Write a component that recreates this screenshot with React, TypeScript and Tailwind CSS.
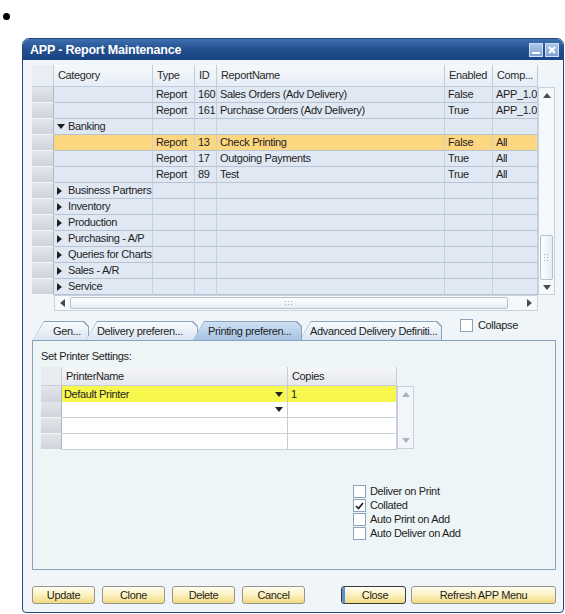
import React from 'react'

type ReportRow =
  | { kind: 'item'; type: string; id: string; name: string; enabled: string; comp: string; selected?: boolean }
  | { kind: 'group'; label: string; open?: boolean }

const reportRows: ReportRow[] = [
  { kind: 'item', type: 'Report', id: '160', name: 'Sales Orders (Adv Delivery)', enabled: 'False', comp: 'APP_1.0' },
  { kind: 'item', type: 'Report', id: '161', name: 'Purchase Orders (Adv Delivery)', enabled: 'True', comp: 'APP_1.0' },
  { kind: 'group', label: 'Banking', open: true },
  { kind: 'item', type: 'Report', id: '13', name: 'Check Printing', enabled: 'False', comp: 'All', selected: true },
  { kind: 'item', type: 'Report', id: '17', name: 'Outgoing Payments', enabled: 'True', comp: 'All' },
  { kind: 'item', type: 'Report', id: '89', name: 'Test', enabled: 'True', comp: 'All' },
  { kind: 'group', label: 'Business Partners' },
  { kind: 'group', label: 'Inventory' },
  { kind: 'group', label: 'Production' },
  { kind: 'group', label: 'Purchasing - A/P' },
  { kind: 'group', label: 'Queries for Charts' },
  { kind: 'group', label: 'Sales - A/R' },
  { kind: 'group', label: 'Service' },
]

const headers = ['Category', 'Type', 'ID', 'ReportName', 'Enabled', 'Comp...']

const tabs = [
  { label: 'Gen...', box: 'w-[56px]', pad: 'pl-[20px]' },
  { label: 'Delivery preferen...', box: 'w-[112px] -ml-[3px]', pad: 'pl-[11px]' },
  { label: 'Printing preferen...', box: 'w-[109px] -ml-[5px] z-10', pad: 'pl-[15px]', active: true },
  { label: 'Advanced Delivery Definiti...', box: 'w-[142px] -ml-[2px]', pad: 'pl-[10px]' },
]

const printOptions = [
  { label: 'Deliver on Print', checked: false },
  { label: 'Collated', checked: true },
  { label: 'Auto Print on Add', checked: false },
  { label: 'Auto Deliver on Add', checked: false },
]

function Arrow({ dir, color = '#4a4a4a' }: { dir: 'up' | 'down' | 'left' | 'right'; color?: string }) {
  if (dir === 'up' || dir === 'down') {
    return (
      <svg width="8" height="5" viewBox="0 0 8 5" className="shrink-0">
        <path d={dir === 'up' ? 'M0 5L4 0L8 5Z' : 'M0 0L8 0L4 5Z'} fill={color} />
      </svg>
    )
  }
  return (
    <svg width="5" height="8" viewBox="0 0 5 8" className="shrink-0">
      <path d={dir === 'right' ? 'M0 0L5 4L0 8Z' : 'M5 0L0 4L5 8Z'} fill={color} />
    </svg>
  )
}

function Grip({ across }: { across?: boolean }) {
  return across ? (
    <svg width="8" height="5" viewBox="0 0 8 5">
      {[0, 3, 6].map((x) => (
        <g key={x} fill="#9fb0c3">
          <rect x={x} y="0" width="1" height="1" />
          <rect x={x} y="3" width="1" height="1" />
        </g>
      ))}
    </svg>
  ) : (
    <svg width="5" height="8" viewBox="0 0 5 8">
      {[0, 3, 6].map((y) => (
        <g key={y} fill="#9fb0c3">
          <rect x="0" y={y} width="1" height="1" />
          <rect x="3" y={y} width="1" height="1" />
        </g>
      ))}
    </svg>
  )
}

function RowHead() {
  return <div className="border-r border-r-[#aeb6c0] border-b border-b-[#f3f5f8] bg-gradient-to-b from-[#e3e6eb] to-[#cfd4db]" />
}

function Cell({ children, bg }: { children?: React.ReactNode; bg: string }) {
  return (
    <div className={`flex items-center pl-[3px] whitespace-nowrap overflow-hidden border-r border-r-[#c6d0dc] border-b border-b-[#b7c3d1] ${bg}`}>
      {children}
    </div>
  )
}

function ReportGrid() {
  return (
    <div className="w-[523px]">
      <div className="flex">
        <div className="w-[506px]">
          <div className="grid grid-cols-[22px_99px_42px_22px_228px_48px_45px] h-[22px]">
            <div className="border-r border-b border-[#c2cddb] bg-[#e9eef5]" />
            {headers.map((h) => (
              <div key={h} className="flex items-center pl-[4px] border-r border-b border-[#c2cddb] bg-gradient-to-b from-[#f5f8fb] to-[#e6edf6] text-[#2a2a2a]">
                {h}
              </div>
            ))}
          </div>
          {reportRows.map((row, i) => {
            if (row.kind === 'group') {
              return (
                <div key={i} className="grid grid-cols-[22px_99px_42px_22px_228px_48px_45px] h-[16px]">
                  <RowHead />
                  <Cell bg="bg-[#e0e8f4]">
                    <span className="w-[11px] shrink-0 flex items-center">
                      <Arrow dir={row.open ? 'down' : 'right'} color="#1f1f1f" />
                    </span>
                    {row.label}
                  </Cell>
                  <Cell bg="bg-[#e0e8f4]" />
                  <Cell bg="bg-[#e0e8f4]" />
                  <Cell bg="bg-[#e0e8f4]" />
                  <Cell bg="bg-[#e0e8f4]" />
                  <Cell bg="bg-[#e0e8f4]" />
                </div>
              )
            }
            const bg = row.selected ? 'bg-[#fdd680]' : 'bg-[#e0e8f4]'
            return (
              <div key={i} className="grid grid-cols-[22px_99px_42px_22px_228px_48px_45px] h-[16px]">
                <RowHead />
                <Cell bg={bg} />
                <Cell bg={bg}>{row.type}</Cell>
                <Cell bg={bg}>{row.id}</Cell>
                <Cell bg={bg}>{row.name}</Cell>
                <Cell bg={bg}>{row.enabled}</Cell>
                <Cell bg={bg}>{row.comp}</Cell>
              </div>
            )
          })}
        </div>
        {/* vertical scrollbar */}
        <div className="w-[17px] pt-[22px]">
          <div className="h-[208px] flex flex-col border border-[#c8d2de] bg-[#f6f9fc]">
            <div className="h-[15px] flex items-center justify-center">
              <Arrow dir="up" />
            </div>
            <div className="flex-1" />
            <div className="h-[45px] mx-[1px] rounded-[2px] border border-[#b3c1d1] bg-gradient-to-r from-white to-[#e6edf5] flex items-center justify-center">
              <Grip />
            </div>
            <div className="h-[14px] flex items-center justify-center">
              <Arrow dir="down" />
            </div>
          </div>
        </div>
      </div>
      {/* horizontal scrollbar */}
      <div className="flex h-[16px]">
        <div className="w-[22px]" />
        <div className="w-[484px] flex border border-[#c8d2de] bg-[#f6f9fc]">
          <div className="w-[15px] flex items-center justify-center">
            <Arrow dir="left" />
          </div>
          <div className="w-[438px] my-[1px] rounded-[2px] border border-[#b3c1d1] bg-gradient-to-b from-white to-[#e6edf5] flex items-center justify-center">
            <Grip across />
          </div>
          <div className="flex-1" />
          <div className="w-[15px] flex items-center justify-center">
            <Arrow dir="right" />
          </div>
        </div>
      </div>
    </div>
  )
}

function CheckBox({ checked }: { checked?: boolean }) {
  return (
    <div className="w-[13px] h-[13px] shrink-0 border border-[#8ea3b9] bg-white flex items-center justify-center">
      {checked && (
        <svg width="9" height="8" viewBox="0 0 9 8">
          <path d="M1 4L3.5 6.5L8 1" stroke="#1a1a1a" strokeWidth="1.6" fill="none" />
        </svg>
      )}
    </div>
  )
}

function TabRow() {
  return (
    <div className="flex h-[29px] items-end">
      <div className="flex items-end ml-[1px]">
        {tabs.map((t) => (
          <div
            key={t.label}
            className={`relative h-[19px] pt-[1px] pr-[1px] bg-[#8aa2bd] [clip-path:polygon(11px_0,calc(100%_-_5px)_0,100%_5px,100%_100%,0_100%)] ${t.box}`}
          >
            <div
              className={`h-full flex items-center whitespace-nowrap overflow-hidden text-[#1e1e1e] [clip-path:polygon(11px_0,calc(100%_-_5px)_0,100%_5px,100%_100%,0_100%)] bg-gradient-to-b ${
                t.active ? 'from-[#cde0f3] to-[#a6c3e4]' : 'from-[#f8fbfd] to-[#dae6f2]'
              } ${t.pad}`}
            >
              {t.label}
            </div>
          </div>
        ))}
      </div>
      <div className="self-start mt-[6px] ml-[18px] flex items-center gap-[5px]">
        <CheckBox />
        <span>Collapse</span>
      </div>
    </div>
  )
}

function PrinterPanel() {
  return (
    <div className="w-[524px] h-[230px] border border-[#8aa2bc] bg-[#edf5f7] pt-[9px] px-[8px]">
      <div className="leading-[13px]">Set Printer Settings:</div>
      <div className="mt-[4px] flex">
        <div className="w-[356px]">
          <div className="grid grid-cols-[21px_226px_109px] h-[19px]">
            <div className="border-r border-b border-[#c7ced7] bg-[#e9ecf0]" />
            <div className="flex items-center pl-[4px] border-r border-b border-[#c7ced7] bg-gradient-to-b from-[#f6f7f9] to-[#e5e8ec]">PrinterName</div>
            <div className="flex items-center pl-[4px] border-r border-b border-[#c7ced7] bg-gradient-to-b from-[#f6f7f9] to-[#e5e8ec]">Copies</div>
          </div>
          {[0, 1, 2, 3].map((r) => {
            const first = r === 0
            const bg = first ? 'bg-[#f7f74e]' : 'bg-white'
            const line = first ? 'border-b-[#d9d92a]' : 'border-b-[#c9ced6]'
            return (
              <div key={r} className="grid grid-cols-[21px_226px_109px] h-[16px]">
                <div className="border-r border-r-[#aeb6c0] border-b border-b-[#f3f5f8] bg-gradient-to-b from-[#e3e6eb] to-[#cfd4db]" />
                <div className={`flex items-center justify-between pl-[2px] pr-[4px] border-r border-r-[#c9ced6] border-b ${line} ${bg}`}>
                  <span>{first ? 'Default Printer' : ''}</span>
                  {r < 2 && <Arrow dir="down" color="#222" />}
                </div>
                <div className={`flex items-center pl-[3px] border-r border-r-[#c9ced6] border-b ${line} ${bg}`}>{first ? '1' : ''}</div>
              </div>
            )
          })}
        </div>
        <div className="w-[17px] pt-[19px]">
          <div className="h-[63px] flex flex-col justify-between py-[5px] items-center border border-[#c6d1dd] bg-[#f2f6fa]">
            <Arrow dir="up" color="#aab5c1" />
            <Arrow dir="down" color="#aab5c1" />
          </div>
        </div>
      </div>
      <div className="mt-[35px] ml-[312px] flex flex-col gap-[1px]">
        {printOptions.map((o) => (
          <div key={o.label} className="flex items-center gap-[4px] h-[13px]">
            <CheckBox checked={o.checked} />
            <span>{o.label}</span>
          </div>
        ))}
      </div>
    </div>
  )
}

function Button({ label, w, primary }: { label: string; w: string; primary?: boolean }) {
  return (
    <div
      className={`${w} h-[18px] flex rounded-[3px] border overflow-hidden bg-gradient-to-b from-[#fffef2] via-[#fcf1bf] to-[#f1da82] ${
        primary ? 'border-[#3b3b3b]' : 'border-[#98968a]'
      }`}
    >
      {primary && <div className="w-[3px] bg-[#5a8ed6]" />}
      <div className="flex-1 flex items-center justify-center text-[#1e1e1e]">{label}</div>
    </div>
  )
}

export default function App() {
  return (
    <div className="w-[565px] h-[614px] bg-white overflow-hidden font-['Liberation_Sans',Arial,sans-serif] text-[11px] tracking-[-0.35px] text-[#1e1e1e]">
      <div className="pl-[3px] pt-[13px]">
        <div className="w-[7px] h-[7px] rounded-full bg-black" />
      </div>
      <div className="ml-[22px] mt-[18px] w-[542px] border border-[#25477c] rounded-t-[7px] rounded-b-[4px] overflow-hidden bg-[#eff5f8]">
        <div className="h-[21px] flex items-center justify-between pl-[7px] pr-[4px] bg-gradient-to-b from-[#3f70b0] via-[#234f8f] to-[#1b4383]">
          <span className="text-white font-bold text-[12.5px] tracking-[-0.2px] pt-[1px]">APP - Report Maintenance</span>
          <div className="flex gap-[2px]">
            <div className="w-[14px] h-[14px] border border-[#cfe0f5] bg-gradient-to-b from-[#abc6e8] to-[#7fa2d1] flex items-end justify-center pb-[2px]">
              <div className="w-[8px] h-[2px] bg-white" />
            </div>
            <div className="w-[14px] h-[14px] border border-[#cfe0f5] bg-gradient-to-b from-[#abc6e8] to-[#7fa2d1] flex items-center justify-center">
              <svg width="8" height="8" viewBox="0 0 8 8">
                <path d="M1 1L7 7M7 1L1 7" stroke="white" strokeWidth="2" />
              </svg>
            </div>
          </div>
        </div>
        <div className="pt-[5px] pl-[9px] pb-[8px]">
          <ReportGrid />
          <TabRow />
          <PrinterPanel />
          <div className="mt-[16px] flex">
            <div className="flex gap-[7px]">
              <Button label="Update" w="w-[63px]" />
              <Button label="Clone" w="w-[63px]" />
              <Button label="Delete" w="w-[63px]" />
              <Button label="Cancel" w="w-[63px]" />
            </div>
            <div className="ml-[36px] flex gap-[5px]">
              <Button label="Close" w="w-[65px]" primary />
              <Button label="Refresh APP Menu" w="w-[145px]" />
            </div>
          </div>
        </div>
      </div>
    </div>
  )
}
